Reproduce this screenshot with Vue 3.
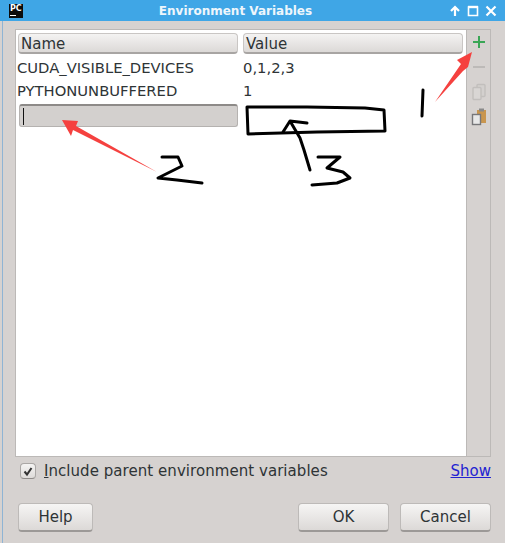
<script setup>
const rows = [
  { name: 'CUDA_VISIBLE_DEVICES', value: '0,1,2,3' },
  { name: 'PYTHONUNBUFFERED', value: '1' },
]
</script>

<template>
  <div class="dialog">
    <header class="titlebar">
      <div class="app-logo"><span>PC</span><i></i></div>
      <div class="title">Environment Variables</div>
      <div class="win-btns">
        <svg width="14" height="14" viewBox="0 0 14 14"><path d="M7 12V3M3 7l4-4 4 4" fill="none" stroke="#fff" stroke-width="2.2" /></svg>
        <svg width="14" height="14" viewBox="0 0 14 14"><path d="M2.5 3h9v8.5h-9z" fill="none" stroke="#fff" stroke-width="1.6" /><path d="M2 3h10" stroke="#fff" stroke-width="2.4" /></svg>
        <svg width="14" height="14" viewBox="0 0 14 14"><path d="M2.5 2.5l9 9M11.5 2.5l-9 9" fill="none" stroke="#fff" stroke-width="2.2" /></svg>
      </div>
    </header>

    <main class="body">
      <div class="panel">
        <div class="table">
          <div class="table-head">
            <div class="head-cell">Name</div>
            <div class="head-cell">Value</div>
          </div>
          <div v-for="row in rows" :key="row.name" class="row">
            <span class="cell name">{{ row.name }}</span>
            <span class="cell">{{ row.value }}</span>
          </div>
          <div class="editor"><i class="caret"></i></div>
        </div>
        <div class="tools">
          <svg width="16" height="16" viewBox="0 0 16 16"><path d="M8 2v12M2 8h12" stroke="#3aa655" stroke-width="2" /></svg>
          <svg class="minus" width="16" height="16" viewBox="0 0 16 16"><path d="M2 8h12" stroke="#bdbab8" stroke-width="2" /></svg>
          <svg width="16" height="18" viewBox="0 0 16 18">
            <rect x="6" y="1.5" width="8" height="12" rx="1" fill="#d3d0ce" stroke="#c2bfbd" stroke-width="1.4" />
            <rect x="2" y="4.5" width="8" height="12" rx="1" fill="#d9d6d4" stroke="#c2bfbd" stroke-width="1.4" />
          </svg>
          <svg class="paste" width="16" height="18" viewBox="0 0 16 18">
            <rect x="6" y="2" width="9" height="13" fill="#c9964f" />
            <rect x="8" y="0.5" width="5" height="3" fill="#8a8a8a" />
            <rect x="1.5" y="6.5" width="8" height="10" fill="#e8e8e8" stroke="#77777a" stroke-width="1.4" />
          </svg>
        </div>
      </div>

      <div class="options">
        <label class="check">
          <span class="box">
            <svg width="12" height="12" viewBox="0 0 12 12"><path d="M2.5 6.5l2.5 3L9.5 3" fill="none" stroke="#333" stroke-width="2" /></svg>
          </span>
          <span class="check-text"><u>I</u>nclude parent environment variables</span>
        </label>
        <a class="show-link">Show</a>
      </div>

      <footer class="actions">
        <button class="btn help">Help</button>
        <div class="actions-right">
          <button class="btn">OK</button>
          <button class="btn">Cancel</button>
        </div>
      </footer>
    </main>

    <!-- hand drawn notes on top of the screenshot -->
    <svg class="notes" width="505" height="543" viewBox="0 0 505 543">
      <polygon points="472,52 457,60 461,64 435,102 463,71 468,67" fill="#f5413f" />
      <polygon points="62,120 78,121 76,126 157,172 73,130 71,136" fill="#f5413f" />
      <g fill="none" stroke="#000" stroke-width="3" stroke-linecap="round" stroke-linejoin="round">
        <path d="M423 90L422 116" />
        <path d="M247 107L307 107L365 108L384 110L385 131L317 132L248 134Z" />
        <path d="M283 132L290 121L307 123M290 121L300 138L304 150L310 170" />
        <path d="M318 157L340 157L327 168L343 172L350 178L337 183L312 185" />
        <path d="M162 157L178 157L182 166L158 178L177 180L202 183" />
      </g>
    </svg>
  </div>
</template>

<style scoped>
.dialog {
  position: relative;
  width: 505px;
  height: 543px;
  display: flex;
  flex-direction: column;
  background: #d6d2d0;
  font-family: "DejaVu Sans", sans-serif;
  font-size: 15px;
  color: #2e3436;
  overflow: hidden;
}

.titlebar {
  height: 21px;
  flex-shrink: 0;
  display: flex;
  align-items: center;
  background: #3fa6e6;
  position: relative;
}

.app-logo {
  width: 14px;
  height: 14px;
  margin-left: 9px;
  background: #0c0c0c;
  color: #fff;
  font-size: 8px;
  font-weight: 700;
  line-height: 8px;
  display: flex;
  flex-direction: column;
  padding: 1px 0 0 1px;
  box-sizing: border-box;
}

.app-logo i {
  display: block;
  width: 6px;
  height: 1px;
  margin-top: 2px;
  background: #fff;
}

.title {
  flex: 1;
  text-align: center;
  color: #eef6fc;
  font-size: 12px;
  font-weight: 700;
  margin-left: 11px;
  margin-right: 68px;
}

.win-btns {
  position: absolute;
  right: 7px;
  top: 4px;
  display: flex;
  gap: 4px;
}

.body {
  flex: 1;
  display: flex;
  flex-direction: column;
  margin-left: 2px;
  padding: 8px 14px 11px 12px;
  border-left: 1px solid #8fb4d4;
  min-height: 0;
}

.panel {
  height: 428px;
  flex-shrink: 0;
  display: flex;
  border: 1px solid #bcb9b7;
  box-sizing: border-box;
}

.table {
  flex: 1;
  background: #fff;
  border-right: 1px solid #bcb9b7;
  min-width: 0;
}

.table-head {
  display: grid;
  grid-template-columns: 220px 220px;
  column-gap: 5px;
  padding: 3px 0 0 2px;
  background: #fff;
}

.head-cell {
  height: 21px;
  line-height: 20px;
  padding-left: 2px;
  background: linear-gradient(#f4f3f2, #dcd9d7);
  border: 1px solid #c9c6c4;
  border-bottom: 2px solid #a8a5a3;
  border-radius: 4px;
  box-sizing: border-box;
}

.row {
  display: grid;
  grid-template-columns: 226px 1fr;
  height: 23px;
  line-height: 21px;
  padding-left: 1px;
  font-size: 14.75px;
}

.table-head + .row {
  margin-top: 3px;
}

.editor {
  width: 219px;
  height: 23px;
  margin: 1px 0 0 3px;
  box-sizing: border-box;
  background: #d3d0ce;
  border: 1px solid #b5b2b0;
  border-top: 2px solid #8d8a88;
  border-radius: 3px;
  padding: 2px 0 0 3px;
}

.caret {
  display: block;
  width: 1px;
  height: 17px;
  background: #111;
}

.tools {
  width: 23px;
  flex-shrink: 0;
  display: flex;
  flex-direction: column;
  align-items: center;
  gap: 8px;
  padding-top: 4px;
  box-sizing: border-box;
}

.minus {
  margin-top: 1px;
}

.paste {
  margin-top: -1px;
}

.options {
  display: flex;
  justify-content: space-between;
  align-items: center;
  height: 24px;
  padding-top: 3px;
}

.check {
  display: flex;
  align-items: center;
  gap: 8px;
  padding-left: 5px;
}

.check-text {
  letter-spacing: 0.05px;
}

.box {
  width: 14px;
  height: 14px;
  display: flex;
  align-items: center;
  justify-content: center;
  background: linear-gradient(#f5f4f3, #dedbd9);
  border: 1px solid #aaa7a5;
  border-bottom-color: #8e8b89;
  border-radius: 4px;
}

.show-link {
  color: #2323d0;
  text-decoration: underline;
}

.actions {
  display: flex;
  justify-content: space-between;
  margin-top: 21px;
  padding-left: 3px;
}

.actions-right {
  display: flex;
  gap: 11px;
}

.btn {
  width: 91px;
  height: 29px;
  font: inherit;
  color: #2e3436;
  background: linear-gradient(#f6f5f4, #dcd9d7);
  border: 1px solid #bdbab8;
  border-bottom: 2px solid #9c9997;
  border-radius: 4px;
  padding: 0;
}

.btn.help {
  width: 75px;
}

.notes {
  position: absolute;
  left: 0;
  top: 0;
  pointer-events: none;
}
</style>

<style>
html,
body {
  margin: 0;
  background: #d6d2d0;
}
</style>
